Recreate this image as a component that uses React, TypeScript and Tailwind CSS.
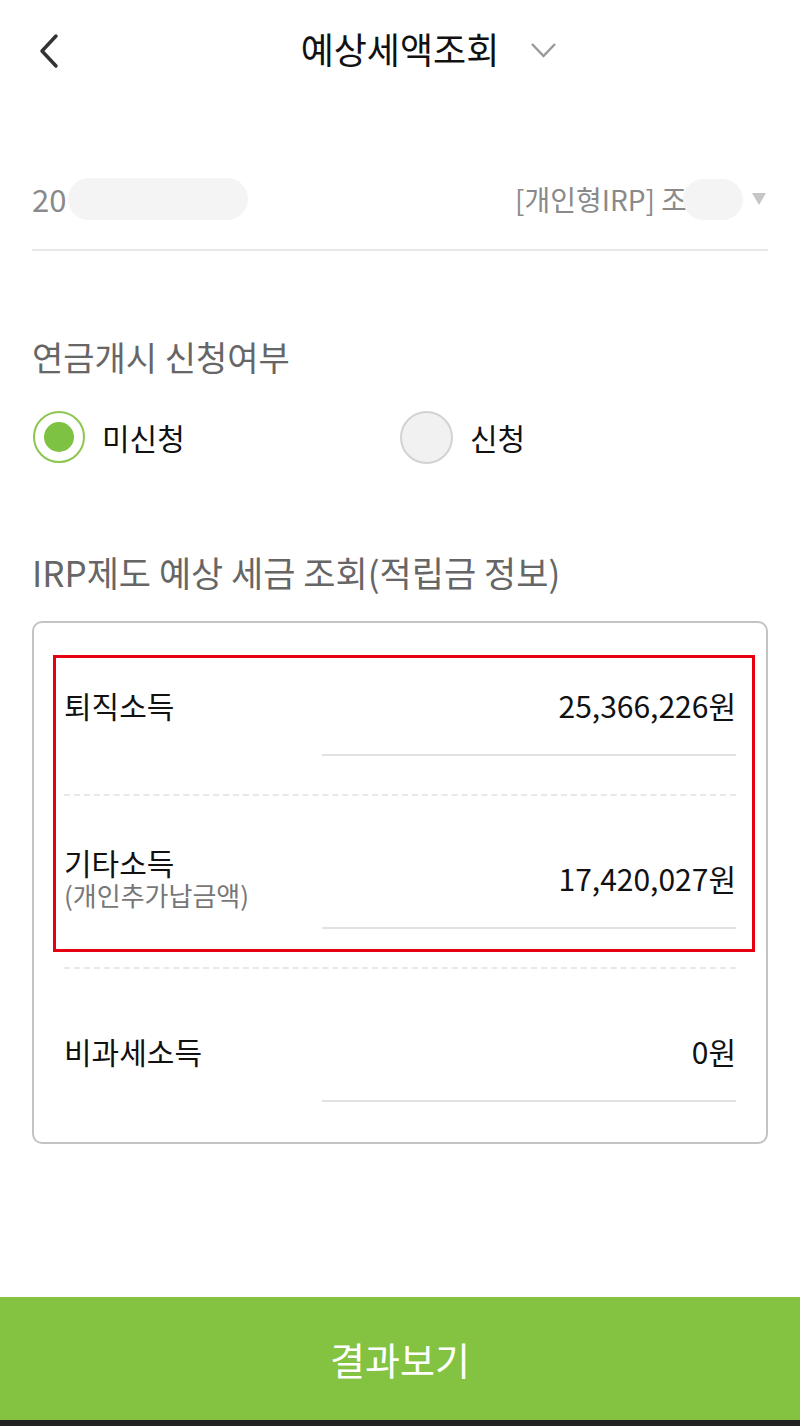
import React from "react";

const font = { fontFamily: '"Noto Sans CJK KR", "Noto Sans", sans-serif' };

function Row({
  label,
  sub,
  value,
  dashed = true,
}: {
  label: string;
  sub?: string;
  value: string;
  dashed?: boolean;
}) {
  return (
    <div
      className={`flex h-[173px] flex-col ${
        dashed ? "border-b-2 border-dashed border-[#e8e8e8]" : ""
      }`}
    >
      <div className="flex h-[131px] items-center justify-between pt-[33px]">
        <div className="flex flex-col">
          <span className="text-[30px] leading-[34px] text-[#111]">{label}</span>
          {sub && <span className="text-[26px] leading-[32px] text-[#777]">{sub}</span>}
        </div>
        <span className="text-[30px] leading-[34px] text-[#111]">{value}</span>
      </div>
      <div className="ml-[258px] h-[2px] bg-[#e2e2e2]" />
    </div>
  );
}

export default function App() {
  return (
    <div className="flex h-[1426px] w-[800px] flex-col bg-white" style={font}>
      {/* header */}
      <div className="relative flex h-[100px] items-center justify-center">
        <svg className="absolute left-[36px] top-[33px]" width="26" height="36" viewBox="0 0 26 36">
          <path d="M20 3 L6 18 L20 33" fill="none" stroke="#333" strokeWidth="3.5" strokeLinecap="round" strokeLinejoin="round" />
        </svg>
        <div className="relative pb-[4px]">
          <span className="text-[36px] leading-[42px] text-[#111]">예상세액조회</span>
          <svg className="absolute left-full top-[15px] ml-[31px]" width="27" height="16" viewBox="0 0 27 16">
            <path d="M2 2 L13.5 14 L25 2" fill="none" stroke="#9a9a9a" strokeWidth="2.5" />
          </svg>
        </div>
      </div>

      {/* account selector */}
      <div className="mx-[32px] mt-[49px] flex h-[102px] items-center justify-between border-b-2 border-[#e8e8e8]">
        <div className="flex items-center">
          <span className="text-[31px] leading-[40px] text-[#8a8a8a]">20</span>
          <div className="ml-[2px] h-[42px] w-[180px] rounded-[21px] bg-[#f4f4f4]" />
        </div>
        <div className="flex items-center">
          <span className="text-[28px] leading-[40px] text-[#8a8a8a]">[개인형IRP] 조</span>
          <div className="ml-[-4px] h-[41px] w-[60px] rounded-full bg-[#f4f4f4]" />
          <svg className="ml-[9px] mr-[2px]" width="14" height="12" viewBox="0 0 14 12">
            <path d="M0 0 H14 L7 12 Z" fill="#c6c6c6" />
          </svg>
        </div>
      </div>

      {/* pension start */}
      <div className="mx-[32px] mt-[84px] text-[34px] leading-[44px] text-[#666]">
        연금개시 신청여부
      </div>
      <div className="mx-[32px] mt-[30px] flex h-[56px] items-center">
        <div className="flex w-[368px] items-center">
          <div className="ml-[1px] flex h-[52px] w-[52px] items-center justify-center rounded-full border-2 border-[#8cc651] bg-white">
            <div className="h-[30px] w-[30px] rounded-full bg-[#7dc242]" />
          </div>
          <span className="ml-[17px] text-[30px] leading-[40px] text-[#111]">미신청</span>
        </div>
        <div className="flex items-center">
          <div className="h-[53px] w-[53px] rounded-full border-2 border-[#d2d2d2] bg-[#f1f1f1]" />
          <span className="ml-[17px] text-[30px] leading-[40px] text-[#111]">신청</span>
        </div>
      </div>

      {/* IRP tax estimate */}
      <div className="mx-[32px] mt-[85px] text-[35px] leading-[44px] text-[#666]">
        IRP제도 예상 세금 조회(적립금 정보)
      </div>
      <div className="relative mx-[32px] mt-[27px] rounded-[10px] border-2 border-[#c4c4c4] px-[30px]">
        <Row label="퇴직소득" value="25,366,226원" />
        <Row label="기타소득" sub="(개인추가납금액)" value="17,420,027원" />
        <Row label="비과세소득" value="0원" dashed={false} />
        {/* red highlight frame over the first two rows */}
        <div className="pointer-events-none absolute left-[19px] top-[32px] h-[297px] w-[702px] border-[3px] border-[#e60012]" />
      </div>

      <div className="flex-1" />

      {/* result button */}
      <div className="flex h-[123px] items-center justify-center bg-[#84c341]">
        <span className="text-[38px] leading-[44px] text-white">결과보기</span>
      </div>
      <div className="h-[6px] bg-[#222]" />
    </div>
  );
}
